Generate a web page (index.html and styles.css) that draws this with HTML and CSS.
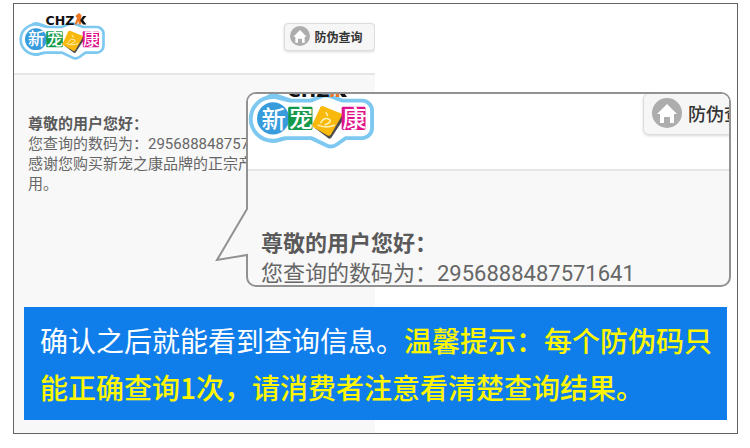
FILE: index.html
```html
<!DOCTYPE html>
<html lang="zh-CN">
<head>
  <meta charset="UTF-8">
  <title>防伪查询</title>
  <link rel="stylesheet" href="styles.css">
</head>
<body>
  <!-- shared drawings -->
  <svg class="defs" aria-hidden="true">
    <symbol id="logo" viewBox="56 38 262 146">
      <g stroke-linejoin="round">
        <path d="M108 92 L140 103 L188 103 L216 92 L246 103 L290 103 L290 139 L250 139 L226 156 L190 139 L132 139 L108 145 Z" fill="#7cc8f0" stroke="#7cc8f0" stroke-width="49"/>
        <circle cx="106" cy="120" r="49" fill="#7cc8f0"/>
        <path d="M108 96 L140 103 L188 103 L216 92 L246 103 L290 103 L290 139 L250 139 L226 156 L190 139 L132 139 L108 143 Z" fill="#fff" stroke="#fff" stroke-width="33"/>
        <circle cx="106" cy="120" r="41" fill="#fff"/>
      </g>
      <circle cx="107" cy="119" r="33" fill="#389bdc"/>
      <rect x="138" y="95" width="50" height="48" rx="3" fill="#14994a"/>
      <path d="M192 138 L222 161 L226 160 L251 122 L248 112 Z" fill="#4d4d4d"/>
      <path d="M210 94 L247 109 Q250 111 248 114 L226 152 Q223 156 219 154 L190 137 Q187 135 188 131 L204 96 Q206 93 210 94 Z" fill="#f8b90c"/>
      <path d="M216 107 L219 113 M205 128 Q212 115 223 121 Q229 126 214 132 M200 133 Q215 140 233 133" fill="none" stroke="#fff3b8" stroke-width="3" stroke-linecap="round"/>
      <rect x="248" y="95" width="49" height="48" rx="3" fill="#e0138b"/>
      <g class="logo-name">
        <text x="83" y="138">新</text>
        <text x="139" y="137">宠</text>
        <text x="249" y="137">康</text>
      </g>
      <text class="logo-brand" x="136" y="75">CHZ</text>
      <path d="M226 49 L236 40 L244 46 L243 75 L236 75 L235 64 L230 75 L223 75 L231 56 Z" fill="#ee7623"/>
      <path d="M241 61 L249 49 L259 49 L249 61 L259 75 L249 75 L241 64 Z" fill="#111"/>
    </symbol>
    <symbol id="home" viewBox="0 0 30 30">
      <circle cx="15" cy="15" r="15" fill="#adadad"/>
      <path d="M15 6 L25 16 L22 16 L22 25 L18 25 L18 19 L12 19 L12 25 L8 25 L8 16 L5 16 Z" fill="#fff"/>
    </symbol>
  </svg>

  <main class="frame">
    <section class="screen">
      <header class="screen-header">
        <svg class="logo" role="img" aria-label="CHZK 新宠之康"><use href="#logo"/></svg>
        <button class="query-btn" type="button">
          <svg class="home-icon" aria-hidden="true"><use href="#home"/></svg>防伪查询
        </button>
      </header>
      <div class="message">
        <strong>尊敬的用户您好：</strong>
        <p>您查询的数码为：295688848757</p>
        <p>感谢您购买新宠之康品牌的正宗产</p>
        <p>用。</p>
      </div>
    </section>

    <aside class="callout">
      <div class="callout-screen">
        <header class="screen-header">
          <svg class="logo" role="img" aria-label="CHZK 新宠之康"><use href="#logo"/></svg>
          <button class="query-btn" type="button">
            <svg class="home-icon" aria-hidden="true"><use href="#home"/></svg>防伪查询
          </button>
        </header>
        <div class="message">
          <strong>尊敬的用户您好：</strong>
          <p>您查询的数码为：2956888487571641</p>
        </div>
      </div>
      <svg class="callout-tail" viewBox="0 0 36 60" aria-hidden="true">
        <path d="M36 1 L33 3 L3 54 L33 49 L36 49 Z" fill="#f8f8f8"/>
        <path d="M33 0 L33 3 L3 54 L33 49 L33 54" fill="none" stroke="#929292" stroke-width="2"/>
      </svg>
    </aside>

    <p class="note">确认之后就能看到查询信息。<strong>温馨提示：每个防伪码只能正确查询1次，请消费者注意看清楚查询结果。</strong></p>
  </main>
</body>
</html>
```
FILE: styles.css
```css
:root {
  --panel: #f8f8f8;
  --line: #e6e6e6;
  --text: #666;
  --outline: #929292;
  --blue: #0f7eea;
  --yellow: #fff600;
}

* {
  box-sizing: border-box;
}

body {
  margin: 0;
  padding: 3px 12px 14px 13px;
  min-height: 100vh;
  display: flex;
  background: #fff;
  font-family: Roboto, "Noto Sans CJK SC", sans-serif;
  color: var(--text);
}

p {
  margin: 0;
}

.defs {
  position: absolute;
  width: 0;
  height: 0;
}

.frame {
  position: relative;
  flex: 1;
  display: grid;
  grid-template-columns: 1fr 1fr;
  grid-template-rows: 1fr auto;
  border: 1px solid #626262;
}

.screen {
  grid-area: 1 / 1 / 3 / 2;
  min-width: 0;
  margin-right: 1px;
  overflow: hidden;
  background: var(--panel);
}

.screen-header {
  display: flex;
  justify-content: space-between;
  align-items: flex-start;
  height: 71px;
  padding: 8px 0 0 5px;
  background: #fff;
  border-bottom: 2px solid var(--line);
}

.logo {
  flex: none;
  width: 87px;
  height: 49px;
}

.logo-name {
  font-family: "Noto Sans CJK SC", sans-serif;
  font-size: 50px;
  font-weight: 500;
  fill: #fff;
}

.logo-brand {
  font-family: "DejaVu Sans", sans-serif;
  font-size: 38px;
  font-weight: 700;
  fill: #111;
}

.query-btn {
  flex: none;
  display: flex;
  align-items: center;
  gap: 5px;
  width: 91px;
  height: 28px;
  margin-top: 11px;
  padding: 0 5px 2px;
  border: 1px solid #dcdcdc;
  border-radius: 4px;
  background: #f6f6f6;
  box-shadow: 0 1px 3px rgba(0, 0, 0, 0.15);
  font-family: "Noto Sans CJK SC", sans-serif;
  font-size: 12px;
  font-weight: 700;
  color: #333;
  white-space: nowrap;
}

.home-icon {
  flex: none;
  width: 20px;
  height: 20px;
}

.message {
  padding: 39px 0 0 14px;
  font-size: 15px;
  line-height: 20px;
  white-space: nowrap;
}

.message strong {
  display: block;
  color: #5a5a5a;
}

/* enlarged part of the screen */
.callout {
  position: absolute;
  top: 88px;
  left: 232px;
  right: 6px;
  height: 195px;
}

.callout-screen {
  height: 100%;
  overflow: hidden;
  background: var(--panel);
  border: 2px solid var(--outline);
  border-radius: 10px;
}

.callout .screen-header {
  height: 77px;
  padding: 0;
}

.callout .logo {
  width: 128px;
  height: 71px;
  margin-top: -15px;
}

.callout .query-btn {
  gap: 6px;
  width: 132px;
  height: 42px;
  margin: -1px -46px 0 0;
  padding: 0 8px 2px;
  border-radius: 6px;
  font-size: 18px;
  font-weight: 500;
}

.callout .home-icon {
  width: 30px;
  height: 30px;
}

.callout .message {
  padding: 58px 0 0 13px;
  font-size: 22px;
  line-height: 30px;
}

.callout-tail {
  position: absolute;
  top: 114px;
  left: -32px;
  width: 36px;
  height: 60px;
}

.note {
  position: relative;
  grid-area: 2 / 1 / 3 / 3;
  margin: 0 10px 13px;
  padding: 10px 12px 9px 16px;
  background: var(--blue);
  font-family: "Noto Sans CJK SC", sans-serif;
  font-size: 28px;
  line-height: 47px;
  color: #fff;
}

.note strong {
  font-weight: 500;
  color: var(--yellow);
}
```
